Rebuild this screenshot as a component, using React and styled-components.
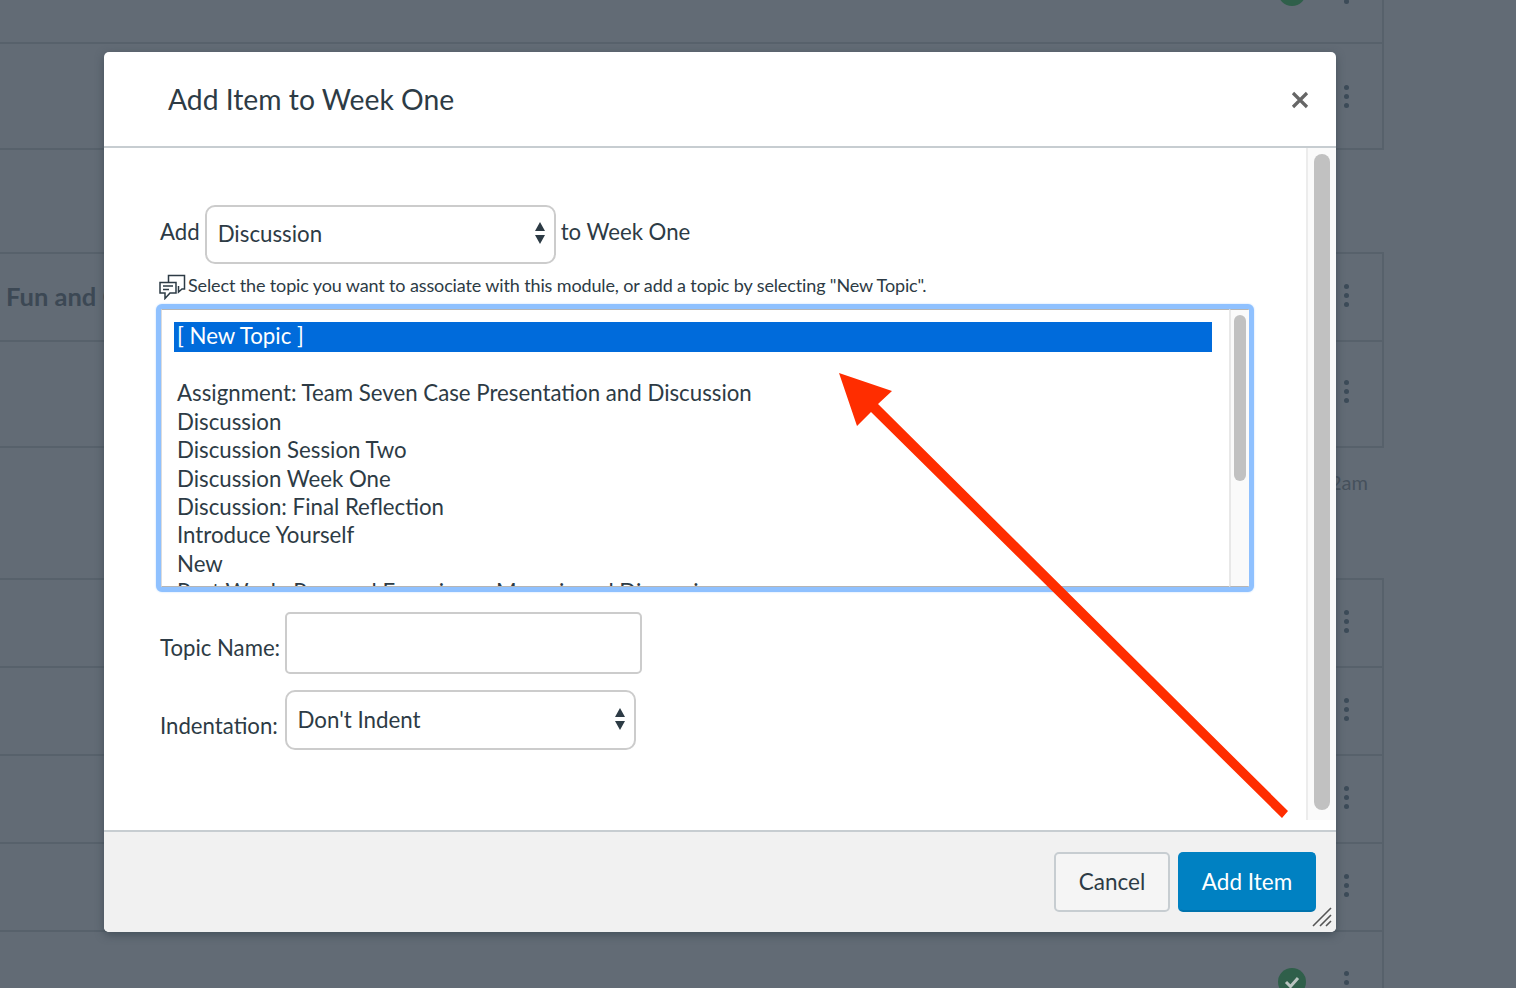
import React from 'react'
import styled, { createGlobalStyle } from 'styled-components'

const GlobalStyle = createGlobalStyle`
  html, body {
    margin: 0;
    height: 100%;
    overflow: hidden;
    background: #626b75;
    font-family: "Lato", "Open Sans", sans-serif;
    color: #2d3b45;
  }
`

const Page = styled.div`
  position: relative;
  width: 1516px;
  height: 988px;
  overflow: hidden;
`

const ModuleList = styled.div`
  width: 1384px;
  margin-top: -58px;
`

const Row = styled.div`
  height: ${props => props.h}px;
  box-sizing: border-box;
  padding: 0 33px ${props => props.lift || 0}px 0;
  border-bottom: 2px solid #57616b;
  border-right: 2px solid #57616b;
  display: flex;
  align-items: center;
  justify-content: flex-end;
  gap: 38px;
  overflow: hidden;
`

const Gap = styled.div`
  height: ${props => props.h}px;
  box-sizing: border-box;
  border-bottom: 2px solid #57616b;
  padding-top: 22px;
  padding-right: 16px;
  text-align: right;
  font-size: 20px;
  color: #46515c;
`

const RowTitle = styled.div`
  flex: 1;
  padding: 2px 0 0 6px;
  font-size: 25.5px;
  font-weight: 700;
  color: #3c4854;
  white-space: nowrap;
`

const Dots = styled.div`
  display: flex;
  flex-direction: column;
  gap: 4px;
`

const Dot = styled.span`
  width: 5px;
  height: 5px;
  border-radius: 50%;
  background: #3c4b58;
`

const Status = styled.div`
  width: 28px;
  height: 28px;
  border-radius: 50%;
  background: #2f5f4a;
  display: flex;
  align-items: center;
  justify-content: center;
`

const Modal = styled.div`
  position: absolute;
  left: 104px;
  top: 52px;
  width: 1232px;
  height: 880px;
  background: #fff;
  border-radius: 5px;
  box-shadow: 0 3px 8px rgba(45, 59, 69, 0.55);
  display: flex;
  flex-direction: column;
  overflow: hidden;
`

const Header = styled.div`
  height: 96px;
  box-sizing: border-box;
  flex: none;
  padding: 0 27px 0 64px;
  border-bottom: 2px solid #c7cdd1;
  display: flex;
  align-items: center;
  justify-content: space-between;
`

const Title = styled.h1`
  margin: 0;
  font-size: 28.3px;
  font-weight: 400;
  color: #2d3b45;
`

const Body = styled.div`
  flex: 1;
  min-height: 0;
  display: flex;
  padding-bottom: 10px;
`

const Content = styled.div`
  flex: 1;
  min-width: 0;
  padding: 57px 48px 0 56px;
`

const PageScroll = styled.div`
  flex: none;
  width: 30px;
  box-sizing: border-box;
  padding: 6px 6px 10px 6px;
  background: #fafafa;
  border-left: 2px solid #ececec;
  display: flex;
`

const ScrollThumb = styled.div`
  flex: 1;
  border-radius: 8px;
  background: #c1c1c1;
`

const AddRow = styled.div`
  display: flex;
  align-items: center;
  gap: 5px;
  height: 59px;
`

const Label = styled.span`
  position: relative;
  top: ${props => props.shift || 0}px;
  width: ${props => (props.w ? `${props.w}px` : 'auto')};
  font-size: 22.2px;
  white-space: nowrap;
`

const SelectBox = styled.div`
  width: 351px;
  height: ${props => props.h}px;
  box-sizing: border-box;
  padding: 0 8px ${props => props.lift}px 11px;
  background: #fff;
  border: 2px solid #ccc;
  border-radius: 10px;
  display: flex;
  align-items: center;
  justify-content: space-between;
  font-size: 22.3px;
  color: #2d3b45;
`

const Hint = styled.div`
  display: flex;
  align-items: flex-start;
  gap: 2px;
  height: 26px;
  line-height: 22px;
  margin: 10px 0 4px -1px;
  font-size: 18px;
  letter-spacing: -0.13px;
  color: #2d3b45;
  white-space: nowrap;
`

const ListBox = styled.div`
  width: 1098px;
  height: 288px;
  margin-left: -4px;
  box-sizing: border-box;
  border: 5px solid #8fc1ff;
  border-radius: 6px;
  background: #fff;
  box-shadow: 0 0 2px #b9d9ff;
  display: flex;
  overflow: hidden;
`

const Options = styled.div`
  flex: 1;
  min-width: 0;
  box-sizing: border-box;
  padding: 12px 17px 0 12px;
  border-top: 1px solid #b5b5b5;
  border-bottom: 1px solid #b5b5b5;
  border-left: 1px solid #dcdcdc;
  overflow: hidden;
`

const Option = styled.div`
  height: ${props => (props.selected ? 30 : 28.4)}px;
  line-height: ${props => (props.selected ? 27 : 26.6)}px;
  padding-left: 3px;
  font-size: 22.25px;
  white-space: nowrap;
  background: ${props => (props.selected ? '#006bdb' : 'transparent')};
  color: ${props => (props.selected ? '#fff' : '#2d3b45')};
`

const ListScroll = styled.div`
  flex: none;
  width: 20px;
  box-sizing: border-box;
  padding: 5px 3px 105px 3px;
  background: #fafafa;
  border-left: 2px solid #e8e8e8;
  border-top: 1px solid #b5b5b5;
  border-bottom: 1px solid #b5b5b5;
  display: flex;
`

const FieldRow = styled.div`
  display: flex;
  align-items: center;
  gap: 5px;
  margin-top: ${props => props.top}px;
`

const TextInput = styled.input`
  width: 357px;
  height: 62px;
  box-sizing: border-box;
  background: #fff;
  border: 2px solid #ccc;
  border-radius: 5px;
  outline: none;
`

const Footer = styled.div`
  height: 102px;
  flex: none;
  box-sizing: border-box;
  padding: 20px 20px 0 0;
  background: #f1f1f1;
  border-top: 2px solid #c7cdd1;
  display: flex;
  justify-content: flex-end;
  gap: 8px;
  position: relative;
`

const Button = styled.button`
  height: 60px;
  width: ${props => props.w}px;
  box-sizing: border-box;
  padding: 0 0 2px;
  border-radius: 5px;
  font-family: inherit;
  font-size: 22.5px;
  border: 2px solid ${props => (props.$primary ? '#0081c2' : '#c7cdd1')};
  border-bottom-color: ${props => (props.$primary ? '#0073ad' : '#c7cdd1')};
  background: ${props => (props.$primary ? '#0081c2' : '#f5f5f5')};
  color: ${props => (props.$primary ? '#fff' : '#2d3b45')};
`

const Grip = styled.svg`
  position: absolute;
  right: 4px;
  bottom: 5px;
`

const CloseButton = styled.svg`
  display: block;
  margin-top: 2px;
`

const ArrowLayer = styled.svg`
  position: absolute;
  left: 0;
  top: 0;
  pointer-events: none;
`

const Stepper = () => (
  <svg width="12" height="22" viewBox="0 0 12 22">
    <path d="M6 0 L11 9 H1 Z M1 13 H11 L6 22 Z" fill="#2d3b45" />
  </svg>
)

const More = () => (
  <Dots>
    <Dot />
    <Dot />
    <Dot />
  </Dots>
)

const Check = () => (
  <Status>
    <svg width="16" height="14" viewBox="0 0 16 14">
      <path d="M2 7 L6.5 11.5 L14 3" fill="none" stroke="#b9c4c0" strokeWidth="3" />
    </svg>
  </Status>
)

const ChatIcon = () => (
  <svg width="27" height="26" viewBox="0 0 27 26" fill="none" stroke="#2d3b45" strokeWidth="1.5">
    <path d="M1 8.5 H17 V19 H11 L6 24.5 V19 H1 Z" />
    <path d="M9.5 8 V1.5 H25.5 V15 H23 L19.5 18 V12" />
    <path d="M4 12 H14 M4 15.5 H10" />
  </svg>
)

const topics = [
  '',
  'Assignment: Team Seven Case Presentation and Discussion',
  'Discussion',
  'Discussion Session Two',
  'Discussion Week One',
  'Discussion: Final Reflection',
  'Introduce Yourself',
  'New',
  'Post Week: Personal Experience Memoir and Discussion',
]

const App = () => {
  return (
    <Page>
      <GlobalStyle />
      <ModuleList>
        <Row h={102}><Check /><More /></Row>
        <Row h={106}><More /></Row>
        <Gap h={104} />
        <Row h={88} lift={4}><RowTitle>Fun and Games</RowTitle><More /></Row>
        <Row h={106} lift={6}><More /></Row>
        <Gap h={132}>12am</Gap>
        <Row h={88} lift={4}><More /></Row>
        <Row h={88} lift={4}><More /></Row>
        <Row h={88} lift={4}><More /></Row>
        <Row h={88} lift={4}><More /></Row>
        <Row h={102}><Check /><More /></Row>
      </ModuleList>

      <Modal>
        <Header>
          <Title>Add Item to Week One</Title>
          <CloseButton width="18" height="18" viewBox="0 0 18 18">
            <path d="M2 2 L16 16 M16 2 L2 16" stroke="#666" strokeWidth="3.2" />
          </CloseButton>
        </Header>
        <Body>
          <Content>
            <AddRow>
              <Label shift={-3}>Add</Label>
              <SelectBox h={59} lift={3}>
                Discussion
                <Stepper />
              </SelectBox>
              <Label shift={-3}>to Week One</Label>
            </AddRow>
            <Hint>
              <ChatIcon />
              Select the topic you want to associate with this module, or add a topic by selecting "New Topic".
            </Hint>
            <ListBox>
              <Options>
                <Option selected>[ New Topic ]</Option>
                {topics.map((topic, i) => (
                  <Option key={i}>{topic}</Option>
                ))}
              </Options>
              <ListScroll>
                <ScrollThumb />
              </ListScroll>
            </ListBox>
            <FieldRow top={20}>
              <Label w={119.5} shift={4}>Topic Name:</Label>
              <TextInput />
            </FieldRow>
            <FieldRow top={16}>
              <Label w={119.5} shift={5}>Indentation:</Label>
              <SelectBox h={60} lift={2}>
                Don't Indent
                <Stepper />
              </SelectBox>
            </FieldRow>
          </Content>
          <PageScroll>
            <ScrollThumb />
          </PageScroll>
        </Body>
        <Footer>
          <Button w={116}>Cancel</Button>
          <Button w={138} $primary>Add Item</Button>
          <Grip width="20" height="20" viewBox="0 0 20 20">
            <path d="M1 19 L19 1 M8 19 L19 8 M14 19 L19 14" stroke="#555" strokeWidth="1.6" />
          </Grip>
        </Footer>
      </Modal>

      <ArrowLayer width="1516" height="988" viewBox="0 0 1516 988">
        <polygon points="839,373 892,391 878,404 1288,811 1282,818 871,412 857,426" fill="#ff2d00" />
      </ArrowLayer>
    </Page>
  )
}

export default App
